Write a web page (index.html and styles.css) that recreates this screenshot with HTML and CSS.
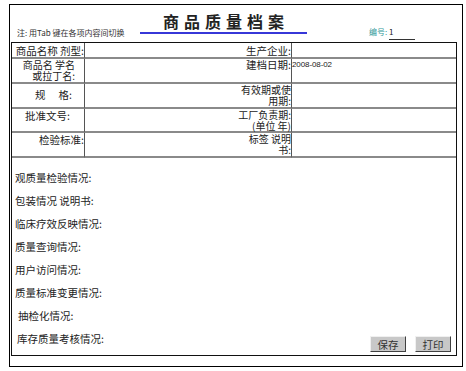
FILE: index.html
```html
<!DOCTYPE html>
<html>
<head>
    <title>商品质量档案</title>
    <meta charset="utf-8">
    <link rel="stylesheet" href="styles.css">
</head>
<body>
    <div class="page">
        <div class="header">
            <div class="note">注: 用Tab 键在各项内容间切换</div>
            <div class="title">商品质量档案</div>
            <div class="num">编号: <span class="num-val">1</span></div>
        </div>

        <div class="sheet">
            <div class="grid">
                <div class="label r1">商品名称 剂型:</div>
                <div class="field"></div>
                <div class="label r1">生产企业:</div>
                <div class="field"></div>

                <div class="label two r2">商品名 学名<br>或拉丁名:</div>
                <div class="field"></div>
                <div class="label r2b">建档日期:</div>
                <div class="field date">2008-08-02</div>

                <div class="label r3">规<span class="gap"></span>格:</div>
                <div class="field"></div>
                <div class="label two">有效期或使<br>用期:</div>
                <div class="field"></div>

                <div class="label r4">批准文号:</div>
                <div class="field"></div>
                <div class="label two">工厂负责期:<br>(单位 年)</div>
                <div class="field"></div>

                <div class="label r5">检验标准:</div>
                <div class="field"></div>
                <div class="label two">标签 说明<br>书:</div>
                <div class="field"></div>
            </div>

            <div class="notes">
                <div class="line">观质量检验情况:</div>
                <div class="line">包装情况 说明书:</div>
                <div class="line">临床疗效反映情况:</div>
                <div class="line">质量查询情况:</div>
                <div class="line">用户访问情况:</div>
                <div class="line">质量标准变更情况:</div>
                <div class="line indent">抽检化情况:</div>
                <div class="line last">
                    <span class="indent-sm">库存质量考核情况:</span>
                    <div class="buttons">
                        <button>保存</button>
                        <button>打印</button>
                    </div>
                </div>
            </div>
        </div>
    </div>
</body>
</html>
```

FILE: styles.css
```css
* {
    margin: 0;
    padding: 0;
    box-sizing: border-box;
}

body {
    background: #fff;
    color: #222;
    font-family: "Noto Sans CJK SC", "Liberation Sans", sans-serif;
}

.page {
    margin: 4px 0 0 9px;
    width: 454px;
    height: 363px;
    border: 1px solid #000;
}

.header {
    display: flex;
    align-items: flex-start;
    height: 37px;
}

.note {
    width: 123px;
    margin: 23px 0 0 7px;
    font-size: 8px;
    line-height: 10px;
    white-space: nowrap;
    color: #333;
}

.title {
    width: 167px;
    margin-top: 7px;
    padding: 0 0 1px 5px;
    font-size: 16px;
    line-height: 19px;
    font-weight: 700;
    letter-spacing: 5px;
    text-align: center;
    border-bottom: 2px solid #3737d8;
}

.num {
    margin: 22px 0 0 62px;
    font-size: 8px;
    line-height: 10px;
    color: #339999;
}

.num-val {
    display: inline-block;
    width: 26px;
    padding-bottom: 2px;
    color: #222;
    border-bottom: 1px solid #333;
}

.sheet {
    margin-left: 1px;
    width: 446px;
    height: 314px;
    border: 1px solid #111;
}

.grid {
    display: grid;
    grid-template-columns: 73px 149px 58px 164px;
    grid-template-rows: 16px 25px 25px 24px 25px;
}

.grid > div {
    border-bottom: 2px solid #8a8a8a;
}

.label {
    font-size: 10.5px;
    line-height: 11px;
    text-align: right;
    white-space: nowrap;
    border-right: 1px solid #555;
}

.label.two {
    font-size: 10px;
    line-height: 11px;
}

.r1 { padding-top: 2px; }
.r2 { padding-right: 9px; }
.r3 { padding: 5px 12px 0 0; }
.r4 { padding: 1px 14px 0 0; }
.r5 { padding-top: 1px; }

.gap {
    display: inline-block;
    width: 13px;
}

.date {
    font-family: "Liberation Sans", sans-serif;
    font-size: 8px;
    line-height: 11px;
    letter-spacing: -0.1px;
}

.notes {
    padding: 8px 0 0 3px;
    font-size: 10.5px;
}

.line {
    line-height: 23px;
    white-space: nowrap;
}

.indent {
    padding-left: 3px;
}

.last {
    display: flex;
    justify-content: space-between;
}

.indent-sm {
    padding-left: 2px;
}

.buttons {
    display: flex;
    gap: 9px;
    margin: 9px 5px 0 0;
}

button {
    width: 36px;
    height: 16px;
    font-family: "Noto Sans CJK SC", sans-serif;
    font-size: 10.5px;
    line-height: 13px;
    color: #333;
    background: #c8c8c8;
    border: 1px solid;
    border-color: #f0f0f0 #404040 #404040 #f0f0f0;
}
```
